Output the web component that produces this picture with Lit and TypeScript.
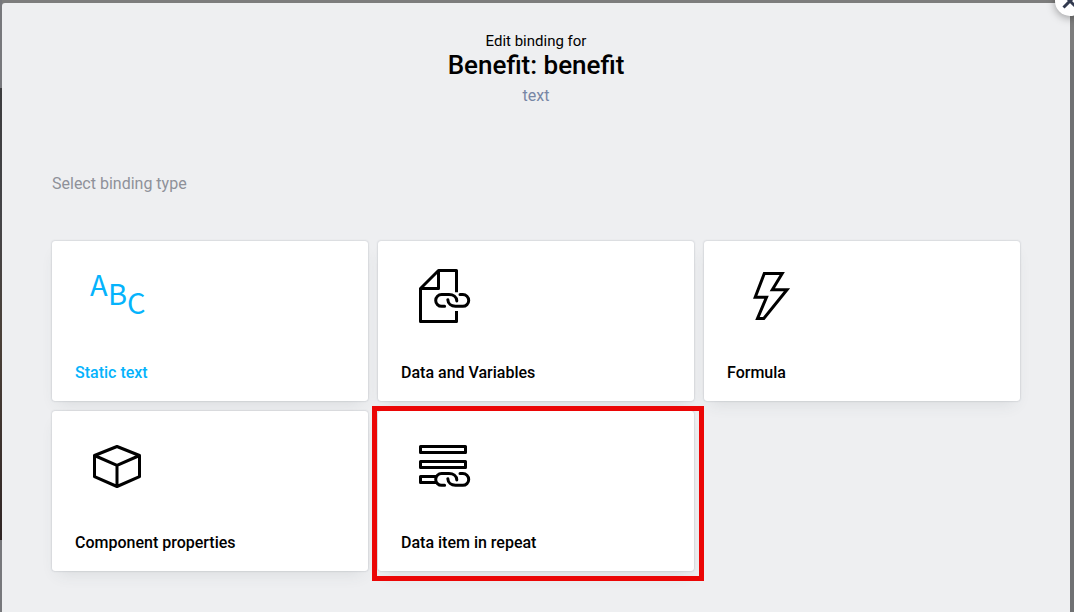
import { LitElement, html, css, svg, type SVGTemplateResult } from "lit";
import { customElement, property, state } from "lit/decorators.js";

const link = (y: number) => svg`
  <g transform="translate(0 ${y})" stroke-linecap="round">
    <path d="M34.6 13.3H31.6a5.9 5.9 0 0 1 0-11.8H39c4.2 0 7.6 2.6 7.8 6.4" />
    <path d="M50 1.5h2.8a5.9 5.9 0 0 1 0 11.8H45.4c-4.2 0-7.4-2.8-7.6-6.6" />
  </g>`;

const icons: Record<string, SVGTemplateResult> = {
  text: svg`
    <g class="letters">
      <text x="6" y="31">A</text>
      <text x="24" y="40">B</text>
      <text x="43" y="49">C</text>
    </g>`,
  data: svg`
    <path stroke-linejoin="round" d="M46.5 27.3V5.5H28.5L10.5 23.5V56.5H46.5V46M28.5 5.5V23.5H10.5" />
    ${link(28)}`,
  formula: svg`<path d="M28.3 8.5H46.2L36.3 24.8H51L27.8 53.5H21.5L30.5 32.3H19.2Z" />`,
  component: svg`
    <path stroke-linejoin="round" d="M33 11.5L55.5 20.5V41.7L33 51.5L10.5 41.7V20.5ZM10.5 20.5L33 30.3L55.5 20.5M33 30.3V51.5" />`,
  repeat: svg`
    <path stroke-linejoin="round" d="M10.5 11.5H55.5V17.5H10.5ZM10.5 26.5H55.5V32.5H10.5ZM26.5 41.5H10.5V47.5H26.5" />
    ${link(37)}`,
};

@customElement("binding-card")
export class BindingCard extends LitElement {
  @property() icon = "text";
  @property() label = "";
  @property({ type: Boolean }) selected = false;

  static styles = css`
    :host {
      display: block;
    }
    .card {
      display: flex;
      flex-direction: column;
      justify-content: space-between;
      align-items: flex-start;
      box-sizing: border-box;
      width: 100%;
      min-height: 160px;
      padding: 24px 23px 18px;
      border: 0;
      border-radius: 3px;
      background: #fff;
      box-shadow: 0 0 2px rgba(60, 70, 85, 0.35), 0 8px 16px -6px rgba(60, 70, 85, 0.12);
      color: #000;
      font: 500 16px/20px Roboto, sans-serif;
      text-align: left;
      cursor: pointer;
    }
    .selected {
      color: #05b3fc;
    }
    .icon {
      width: 64px;
      height: 64px;
      margin-left: 9px;
      overflow: visible;
      fill: none;
      stroke: currentColor;
      stroke-width: 3;
    }
    .letters {
      fill: currentColor;
      stroke: none;
      font: 400 29px "Noto Sans CJK SC", sans-serif;
    }
  `;

  render() {
    return html`
      <button class="card ${this.selected ? "selected" : ""}" aria-pressed=${this.selected}>
        <svg class="icon" viewBox="0 0 64 64" aria-hidden="true">${icons[this.icon]}</svg>
        <span>${this.label}</span>
      </button>
    `;
  }
}

@customElement("app-root")
export class AppRoot extends LitElement {
  @state() private chosen = "text";

  private types = [
    { icon: "text", label: "Static text" },
    { icon: "data", label: "Data and Variables" },
    { icon: "formula", label: "Formula" },
    { icon: "component", label: "Component properties" },
    { icon: "repeat", label: "Data item in repeat", marked: true },
  ];

  static styles = css`
    :host {
      display: flex;
      box-sizing: border-box;
      min-height: 100vh;
      padding: 3px 4px 0 2px;
      overflow: hidden;
      background:
        linear-gradient(#77787c 88px, #3c3c3e 88px, #454548 220px, #4a4038 340px, #302525 540px, #77787c 540px) left / 2px 100% no-repeat,
        linear-gradient(#7d7d7d 50px, #707173 50px);
      font-family: Roboto, sans-serif;
    }
    .dialog {
      position: relative;
      flex: 1;
      padding: 28px 50px 40px;
      border-radius: 3px 0 0 0;
      background: #eeeff1;
    }
    .close {
      position: absolute;
      top: -17px;
      right: -15px;
      width: 30px;
      height: 30px;
      padding: 0;
      border: 0;
      border-radius: 50%;
      background: #fff;
      box-shadow: 0 2px 8px rgba(0, 0, 0, 0.35);
      cursor: pointer;
    }
    .close svg {
      display: block;
      width: 30px;
      height: 30px;
      stroke: #323a4f;
      stroke-width: 3;
    }
    .heading {
      text-align: center;
    }
    .lead {
      margin: 0;
      font-size: 15px;
      line-height: 20px;
    }
    h1 {
      margin: 0;
      font-size: 26px;
      font-weight: 500;
      line-height: 28px;
    }
    .kind {
      margin: 7px 0 0;
      color: #7786a5;
      font-size: 16px;
      line-height: 20px;
    }
    h2 {
      margin: 68px 0 47px;
      color: #8e9199;
      font-size: 16px;
      font-weight: 400;
      line-height: 20px;
    }
    .grid {
      display: grid;
      grid-template-columns: repeat(3, 1fr);
      gap: 10px;
    }
    .cell {
      position: relative;
    }
    .marked::after {
      content: "";
      position: absolute;
      inset: -5px -10px -10px -6px;
      border: 5px solid #eb0606;
      pointer-events: none;
    }
  `;

  render() {
    return html`
      <main class="dialog">
        <button class="close" aria-label="Close">
          <svg viewBox="0 0 30 30" aria-hidden="true"><path d="M8.5 8.5L21.5 21.5M21.5 8.5L8.5 21.5" /></svg>
        </button>
        <header class="heading">
          <p class="lead">Edit binding for</p>
          <h1>Benefit: benefit</h1>
          <p class="kind">text</p>
        </header>
        <h2>Select binding type</h2>
        <div class="grid">
          ${this.types.map(
            (t) => html`
              <div class="cell ${t.marked ? "marked" : ""}">
                <binding-card
                  .icon=${t.icon}
                  .label=${t.label}
                  .selected=${this.chosen === t.icon}
                  @click=${() => (this.chosen = t.icon)}
                ></binding-card>
              </div>
            `
          )}
        </div>
      </main>
    `;
  }
}
